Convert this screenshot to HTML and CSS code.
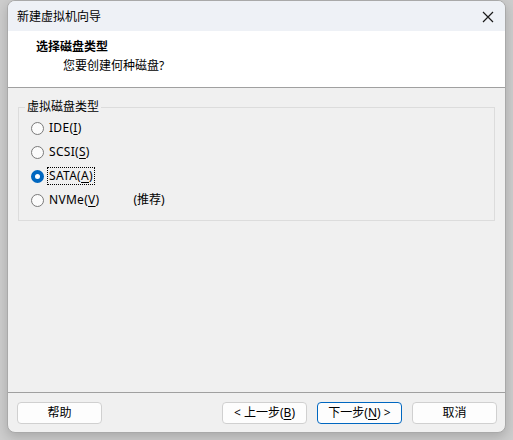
FILE: index.html
```html
<!DOCTYPE html>
<html lang="zh-CN">
<head>
<meta charset="utf-8">
<title>新建虚拟机向导</title>
<link rel="stylesheet" href="styles.css">
</head>
<body>
<div class="window">
  <div class="titlebar">
    <span class="title">新建虚拟机向导</span>
    <span class="close">
      <svg width="12" height="12" viewBox="0 0 12 12"><path d="M1 1 L11 11 M11 1 L1 11" stroke="#1a1a1a" stroke-width="1.2" fill="none"/></svg>
    </span>
  </div>
  <div class="header">
    <div class="h-title">选择磁盘类型</div>
    <div class="h-sub">您要创建何种磁盘?</div>
  </div>
  <div class="content">
    <fieldset class="group">
      <legend>虚拟磁盘类型</legend>
      <div class="radio"><span class="dot"></span><span class="lbl">IDE(<u>I</u>)</span></div>
      <div class="radio"><span class="dot"></span><span class="lbl">SCSI(<u>S</u>)</span></div>
      <div class="radio"><span class="dot on"></span><span class="lbl focus">SATA(<u>A</u>)</span></div>
      <div class="radio"><span class="dot"></span><span class="lbl">NVMe(<u>V</u>)</span><span class="rec">(推荐)</span></div>
    </fieldset>
  </div>
  <div class="footer">
    <button class="btn">帮助</button>
    <div class="right">
      <button class="btn">&lt; 上一步(<u>B</u>)</button>
      <button class="btn default">下一步(<u>N</u>) &gt;</button>
      <button class="btn">取消</button>
    </div>
  </div>
</div>
</body>
</html>
```
FILE: styles.css
```css
* { box-sizing: border-box; }
html, body { margin: 0; padding: 0; }
body {
  width: 513px;
  height: 440px;
  background: #cdcdcd;
  font-family: "Noto Sans", "Noto Sans CJK SC", sans-serif;
  font-size: 12px;
  color: #000;
  overflow: hidden;
}
.window {
  margin-left: 7px;
  width: 499px;
  height: 433px;
  border: 1px solid #a9a9a9;
  border-radius: 8px;
  background: #f0f0f0;
  display: flex;
  flex-direction: column;
  overflow: hidden;
  box-shadow: 0 4px 12px rgba(0,0,0,0.18);
}
.titlebar {
  height: 30px;
  background: #eef1f6;
  display: flex;
  align-items: center;
  justify-content: space-between;
  padding: 0 11px 0 9px;
  flex: none;
}
.title { font-size: 12px; line-height: 16px; padding-top: 1px; }
.close { display: flex; width: 12px; height: 12px; margin-top: 1px; }
.header {
  height: 57px;
  background: #fff;
  border-bottom: 1px solid #a0a0a0;
  flex: none;
  padding-top: 7px;
}
.h-title {
  font-weight: bold;
  padding-left: 28px;
  line-height: 18px;
  height: 18px;
}
.h-sub {
  padding-left: 55px;
  line-height: 18px;
  margin-top: 1px;
}
.content {
  flex: 1;
  padding: 11px 10px 0 10px;
}
.group {
  margin: 0;
  border: 1px solid #dcdcdc;
  padding: 1px 0 6px 12px;
  height: 122px;
  width: 477px;
}
.group legend {
  padding: 0 2px;
  margin-left: -6px;
  line-height: 16px;
}
.radio {
  display: flex;
  align-items: center;
  height: 24px;
}
.dot {
  width: 13px;
  height: 13px;
  border-radius: 50%;
  border: 1px solid #7a7a7a;
  background: #fbfbfb;
  flex: none;
  margin-right: 3px;
}
.dot.on {
  border: 4px solid #0067c0;
  background: #fff;
}
.lbl {
  line-height: 16px;
  padding: 0 1px;
  border: 1px dotted transparent;
  letter-spacing: 0.3px;
}
.lbl.focus { border-color: #000; }
.rec { margin-left: 32px; line-height: 16px; }
.footer {
  flex: none;
  height: 40px;
  border-top: 1px solid #a0a0a0;
  display: flex;
  justify-content: space-between;
  padding: 9px 8px 0 9px;
}
.right { display: flex; gap: 10px; }
.btn {
  font-family: "Noto Sans", "Noto Sans CJK SC", sans-serif;
  font-size: 12px;
  width: 85px;
  height: 22px;
  background: #fdfdfd;
  border: 1px solid #d0d0d0;
  border-radius: 4px;
  padding: 0;
  color: #000;
  line-height: 18px;
}
.btn.default { border-color: #0067c0; }
u { text-decoration-thickness: 1px; text-underline-offset: 2px; }
```
